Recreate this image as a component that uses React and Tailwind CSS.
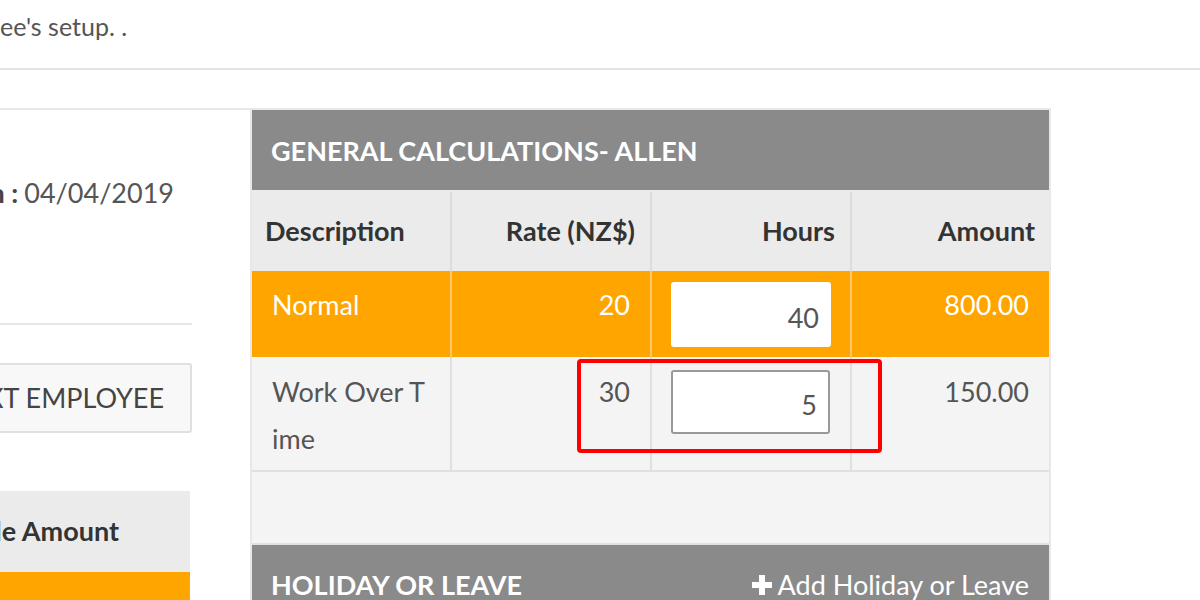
import React from "react";

function PlusIcon() {
  return (
    <svg width="22" height="22" viewBox="0 0 22 22" className="mr-[5px]" aria-hidden="true">
      <path d="M8 1h6v7h7v6h-7v7H8v-7H1V8h7z" fill="#ffffff" />
    </svg>
  );
}

export default function App() {
  return (
    <div className="w-[1200px] h-[600px] overflow-hidden bg-white font-['Lato','Liberation_Sans',sans-serif] text-[27px] text-[#555]">
      {/* top bar */}
      <div className="h-[70px] border-b-2 border-[#e3e3e3] pt-[9px]">
        <div className="leading-[34px] text-[25px] whitespace-nowrap">ee's setup. .</div>
      </div>

      <div className="mt-[38px] flex items-start">
        {/* left panel */}
        <div className="w-[252px] h-[500px] border-t-2 border-r-2 border-[#e8e8e8] shrink-0">
          <div className="w-[192px]">
            <div className="h-[215px] border-b-2 border-[#e8e8e8] pt-[65px] flex justify-end pr-[18px] whitespace-nowrap leading-[36px]">
              <span className="font-bold text-[#444] mr-[6px]">Period Begin :</span>
              <span>04/04/2019</span>
            </div>
            <div className="mt-[38px] ml-[-120px] w-[312px] h-[70px] rounded-[3px] border-2 border-[#e0e0e0] bg-[#f8f8f8] flex items-center justify-end pr-[26px] text-[#444] whitespace-nowrap">
              NEXT EMPLOYEE
            </div>
            <div className="mt-[58px] w-[190px] h-[81px] bg-[#ebebeb] flex items-center justify-end pr-[71px] font-bold text-[#333] whitespace-nowrap">
              Gross Taxable Amount
            </div>
            <div className="w-[190px] h-[60px] bg-[#ffa500]"></div>
          </div>
        </div>

        {/* right panel */}
        <div className="w-[801px] ml-[-2px] border-2 border-[#e8e8e8] shrink-0">
          <div className="h-[80px] bg-[#8a8a8a] flex items-center pl-[19px] pt-[2px] text-white font-bold whitespace-nowrap">
            GENERAL CALCULATIONS- ALLEN
          </div>

          {/* header row */}
          <div className="grid grid-cols-[200px_200px_200px_197px] h-[81px] bg-[#ebebeb] font-bold text-[#333] pt-[2px]">
            <div className="border-r-2 border-[#dcdcdc] flex items-center pl-[13px]">Description</div>
            <div className="border-r-2 border-[#dcdcdc] flex items-center justify-end pr-[15px]">Rate (NZ$)</div>
            <div className="border-r-2 border-[#dcdcdc] flex items-center justify-end pr-[15px]">Hours</div>
            <div className="flex items-center justify-end pr-[14px]">Amount</div>
          </div>

          {/* normal row */}
          <div className="grid grid-cols-[200px_200px_200px_197px] h-[86px] bg-[#ffa500] text-white leading-[47px]">
            <div className="border-r-2 border-[#fcc86a] pt-[10px] pl-[20px]">Normal</div>
            <div className="border-r-2 border-[#fcc86a] pt-[10px] pr-[20px] text-right">20</div>
            <div className="border-r-2 border-[#fcc86a] pt-[11px] px-[19px]">
              <div className="h-[65px] w-full bg-white rounded-[3px] flex items-center justify-end pr-[12px] pt-[6px] text-[#555]">40</div>
            </div>
            <div className="pt-[10px] pr-[20px] text-right">800.00</div>
          </div>

          {/* work over time row */}
          <div className="relative grid grid-cols-[200px_200px_200px_197px] h-[115px] bg-[#f4f4f4] border-b-2 border-[#e0e0e0] leading-[47px]">
            <div className="border-r-2 border-[#e0e0e0] pt-[11px] pl-[20px] pr-[24px] break-all">Work Over Time</div>
            <div className="border-r-2 border-[#e0e0e0] pt-[11px] pr-[20px] text-right">30</div>
            <div className="border-r-2 border-[#e0e0e0] pt-[13px] px-[19px]">
              <div className="h-[64px] w-[159px] bg-white border-2 border-[#999] rounded-[3px] flex items-center justify-end pr-[11px] pt-[4px]">5</div>
            </div>
            <div className="pt-[11px] pr-[20px] text-right">150.00</div>
            <div className="absolute left-[325px] top-[2px] w-[305px] h-[94px] border-4 border-[#ff0000] rounded-[4px]"></div>
          </div>

          {/* empty area */}
          <div className="h-[73px] bg-[#f4f4f4] border-b-2 border-[#e0e0e0]"></div>

          {/* holiday bar */}
          <div className="h-[80px] bg-[#8a8a8a] flex items-start justify-between pt-[20px] pl-[19px] pr-[20px] text-white whitespace-nowrap">
            <span className="font-bold">HOLIDAY OR LEAVE</span>
            <span className="flex items-center"><PlusIcon />Add Holiday or Leave</span>
          </div>
        </div>
      </div>
    </div>
  );
}
